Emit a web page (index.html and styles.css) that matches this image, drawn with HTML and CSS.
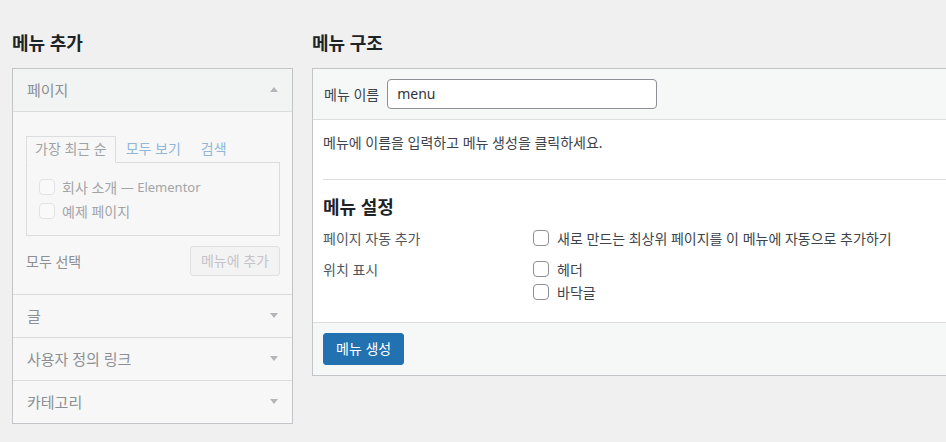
FILE: index.html
```html
<!DOCTYPE html>
<html lang="ko">
<head>
<meta charset="utf-8">
<title>메뉴</title>
<link rel="stylesheet" href="styles.css">
</head>
<body>
<div class="page">
  <div class="col-left">
    <h2 class="section-title">메뉴 추가</h2>
    <div class="accordion">
      <div class="acc-section open">
        <div class="acc-title"><span>페이지</span><span class="arrow up"></span></div>
        <div class="acc-content">
          <ul class="tabs">
            <li class="tab active">가장 최근 순</li>
            <li class="tab link">모두 보기</li>
            <li class="tab link">검색</li>
          </ul>
          <div class="tab-panel">
            <label class="item"><span class="cb cb-faded"></span>회사 소개 <span class="latin">— Elementor</span></label>
            <label class="item"><span class="cb cb-faded"></span>예제 페이지</label>
          </div>
          <div class="actions">
            <span class="select-all">모두 선택</span>
            <span class="btn-disabled">메뉴에 추가</span>
          </div>
        </div>
      </div>
      <div class="acc-section"><div class="acc-title"><span>글</span><span class="arrow down"></span></div></div>
      <div class="acc-section"><div class="acc-title"><span>사용자 정의 링크</span><span class="arrow down"></span></div></div>
      <div class="acc-section last"><div class="acc-title"><span>카테고리</span><span class="arrow down"></span></div></div>
    </div>
  </div>

  <div class="col-right">
    <h2 class="section-title">메뉴 구조</h2>
    <div class="menu-box">
      <div class="menu-header">
        <label class="name-label">메뉴 이름</label>
        <div class="name-input">menu</div>
      </div>
      <div class="menu-body">
        <p class="hint">메뉴에 이름을 입력하고 메뉴 생성을 클릭하세요.</p>
        <div class="settings">
          <h3 class="settings-title">메뉴 설정</h3>
          <div class="settings-grid">
            <div class="set-label">페이지 자동 추가</div>
            <div class="set-options">
              <div class="opt"><span class="cb"></span>새로 만드는 최상위 페이지를 이 메뉴에 자동으로 추가하기</div>
            </div>
            <div class="set-label">위치 표시</div>
            <div class="set-options">
              <div class="opt"><span class="cb"></span>헤더</div>
              <div class="opt"><span class="cb"></span>바닥글</div>
            </div>
          </div>
        </div>
      </div>
      <div class="menu-footer">
        <span class="btn-primary">메뉴 생성</span>
      </div>
    </div>
  </div>
</div>
</body>
</html>
```

FILE: styles.css
```css
html, body {
  margin: 0;
  padding: 0;
  background: #f0f0f1;
  overflow: hidden;
}
body {
  font-family: "Noto Sans", "Noto Sans CJK KR", sans-serif;
  font-size: 14px;
  color: #3c434a;
  width: 946px;
  height: 442px;
}
.page {
  display: flex;
  gap: 19px;
  padding: 31px 0 0 12px;
}
.col-left {
  width: 281px;
  flex: none;
}
.col-right {
  width: 680px;
  flex: none;
}
.section-title {
  margin: 0 0 13px;
  font-size: 18px;
  line-height: 24px;
  font-weight: 700;
  color: #1d2327;
}
.latin {
  font-size: 13px;
}

/* Accordion */
.accordion {
  border: 1px solid #c3c4c7;
  background: #f7f7f7;
}
.acc-section {
  border-bottom: 1px solid #dcdcde;
}
.acc-section.last {
  border-bottom: none;
}
.acc-title {
  box-sizing: border-box;
  height: 42px;
  padding: 0 14px 2px;
  display: flex;
  align-items: center;
  justify-content: space-between;
  font-size: 15px;
  color: #8c8f94;
}
.open .acc-title {
  background: #f2f3f3;
  border-bottom: 1px solid #dcdcde;
  height: 43px;
}
.arrow {
  width: 0;
  height: 0;
  border-left: 4px solid transparent;
  border-right: 4px solid transparent;
}
.arrow.up {
  border-bottom: 5px solid #b4b6b9;
}
.arrow.down {
  border-top: 5px solid #b4b6b9;
}
.acc-content {
  padding: 24px 12px 18px 13px;
}
.tabs {
  list-style: none;
  margin: 0 0 -1px;
  padding: 0;
  display: flex;
  height: 27px;
}
.tab {
  box-sizing: border-box;
  height: 27px;
  line-height: 24px;
  padding: 0 8px;
  border: 1px solid transparent;
  color: #9ea3a8;
}
.tab.active {
  border-color: #dcdcde;
  border-bottom-color: #f7f7f7;
  background: #f7f7f7;
  position: relative;
  z-index: 1;
}
.tab.link {
  color: #8fb8d8;
  padding: 0 9px;
}
.tab-panel {
  border: 1px solid #dcdcde;
  padding: 12px 12px;
}
.item {
  display: flex;
  align-items: center;
  height: 24px;
  color: #a2a5a8;
  white-space: pre;
}
.cb {
  box-sizing: border-box;
  width: 16px;
  height: 16px;
  border: 1px solid #8c8f94;
  border-radius: 4px;
  background: #fff;
  flex: none;
  margin-right: 8px;
}
.cb.cb-faded {
  border-color: #e2e3e4;
  background: #f9f9f9;
  margin-right: 7px;
}
.actions {
  margin-top: 10px;
  display: flex;
  align-items: center;
  justify-content: space-between;
}
.select-all {
  color: #8c8f94;
}
.btn-disabled {
  box-sizing: border-box;
  height: 30px;
  line-height: 28px;
  padding: 0 10px;
  border: 1px solid #e0e0e2;
  border-radius: 3px;
  background: #f3f3f4;
  color: #c3c4c7;
}

/* Menu structure box */
.menu-box {
  border: 1px solid #c3c4c7;
  background: #fff;
}
.menu-header {
  background: #f6f7f7;
  border-bottom: 1px solid #dcdcde;
  padding: 10px 11px;
  display: flex;
  align-items: center;
}
.name-label {
  margin-right: 8px;
  color: #3c434a;
}
.name-input {
  box-sizing: border-box;
  width: 270px;
  height: 30px;
  line-height: 28px;
  padding: 0 9px;
  border: 1px solid #8c8f94;
  border-radius: 4px;
  background: #fff;
  font-size: 14px;
  color: #2c3338;
}
.menu-body {
  padding: 0 10px 18px;
}
.hint {
  margin: 13px 0 0;
  line-height: 19.5px;
  color: #3c434a;
}
.settings {
  margin-top: 26px;
  border-top: 1px solid #dcdcde;
}
.settings-title {
  margin: 15px 0 8px;
  font-size: 18px;
  line-height: 24px;
  font-weight: 700;
  color: #1d2327;
}
.settings-grid {
  display: grid;
  grid-template-columns: 210px 1fr;
  row-gap: 8px;
}
.set-label {
  line-height: 23px;
  color: #50575e;
}
.opt {
  display: flex;
  align-items: center;
  height: 23px;
  color: #3c434a;
}
.menu-footer {
  background: #f6f7f7;
  border-top: 1px solid #dcdcde;
  padding: 10px;
}
.btn-primary {
  display: inline-block;
  box-sizing: border-box;
  height: 32px;
  line-height: 30px;
  padding: 0 12px;
  border: 1px solid #2271b1;
  border-radius: 3px;
  background: #2271b1;
  color: #fff;
}
```
